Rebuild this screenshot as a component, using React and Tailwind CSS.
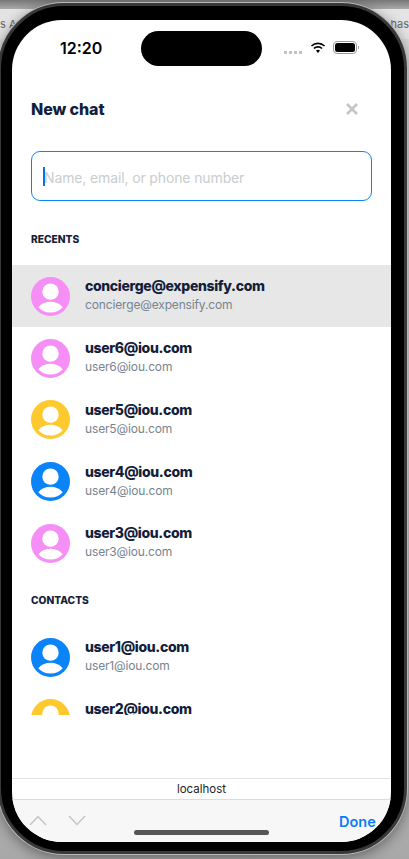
import React from "react";

const PINK = "#f58ff5";
const YELLOW = "#fdc92f";
const BLUE = "#0b84fa";

function Avatar({ color }) {
  return (
    <svg width="39" height="39" viewBox="0 0 40 40" className="shrink-0 mt-[1px]">
      <circle cx="20" cy="20" r="20" fill={color} />
      <circle cx="20" cy="15" r="8.4" fill="#fff" />
      <path d="M7.5 31C10.5 27.5 15 25.5 20 25.5S29.5 27.5 32.5 31C29.5 34.5 25 36.5 20 36.5S10.5 34.5 7.5 31Z" fill="#fff" />
    </svg>
  );
}

function Row({ email, color, active, clipped }) {
  return (
    <div className={`flex items-center gap-[15px] h-[61.75px] px-[19px] shrink-0 ${active ? "bg-[#e7e7e7]" : "bg-white"}`}>
      <Avatar color={color} />
      <div className="flex flex-col pb-[1px]">
        <span className={`text-[14px] font-extrabold tracking-[-0.34px] text-[#122039] ${clipped ? "leading-[11px] mb-[18px]" : "leading-[19px]"}`}>{email}</span>
        {!clipped && <span className="text-[12px] leading-[19px] tracking-[-0.15px] text-[#76848f]">{email}</span>}
      </div>
    </div>
  );
}

export default function App() {
  return (
    <div className="relative w-[409px] h-[859px] overflow-hidden bg-gradient-to-b from-[#dcdcdc] via-[#d6d6d6] to-[#a8a8a8] font-['Inter',sans-serif]">
      {/* browser behind the simulator */}
      <div className="h-[9px] bg-gradient-to-b from-[#777] to-[#aaa]" />
      <div className="flex justify-between h-[30px] bg-[#e4e4e4] text-[11px] leading-[30px] text-[#666]">
        <span>s A</span>
        <span>has</span>
      </div>

      {/* phone */}
      <div className="absolute left-[-2px] top-[3px] w-[409px] h-[851px] rounded-[66px] bg-black border-[3px] border-[#383838] shadow-[0_0_0_1px_#b8b8b8,0_3px_14px_rgba(0,0,0,0.45)]">
        <div className="absolute left-[11px] top-[14px] w-[379px] h-[822px] rounded-[50px] overflow-hidden bg-white flex flex-col">
          {/* status bar */}
          <div className="relative h-[56px] shrink-0">
            <span className="absolute left-[48px] top-[18px] text-[16px] leading-[20px] font-semibold text-black">12:20</span>
            <div className="absolute left-[129px] top-[11px] w-[121px] h-[35px] rounded-full bg-black" />
            <div className="absolute left-[272px] top-[31px] flex gap-[2px] items-center">
              <span className="w-[3px] h-[3px] bg-[#c4c4c4]" />
              <span className="w-[3px] h-[3px] bg-[#c4c4c4]" />
              <span className="w-[3px] h-[3px] bg-[#c4c4c4]" />
              <span className="w-[3px] h-[3px] bg-[#c4c4c4]" />
            </div>
            <svg className="absolute left-[298px] top-[22px]" width="16" height="12" viewBox="0 0 16 12">
              <path d="M8 2.2c2.3 0 4.4.9 6 2.4l1.1-1.2A10.4 10.4 0 0 0 8 .5 10.4 10.4 0 0 0 .9 3.4L2 4.6a8.7 8.7 0 0 1 6-2.4Z" fill="#000" />
              <path d="M8 5.8c1.3 0 2.5.5 3.4 1.3l1.2-1.2A6.8 6.8 0 0 0 8 4.1c-1.8 0-3.4.7-4.6 1.8l1.2 1.2A5 5 0 0 1 8 5.8Z" fill="#000" />
              <path d="M8 7.7c-.8 0-1.5.3-2 .8L8 11l2-2.5a3 3 0 0 0-2-.8Z" fill="#000" />
            </svg>
            <div className="absolute left-[321px] top-[21px] w-[24px] h-[13px] rounded-[4px] border border-[#9a9a9a] p-[1px]">
              <div className="w-full h-full rounded-[2.5px] bg-black" />
            </div>
            <div className="absolute left-[346px] top-[26px] w-[1px] h-[3px] bg-[#aaa]" />
          </div>

          {/* header */}
          <div className="flex items-center justify-between h-[66px] px-[19px] shrink-0">
            <span className="text-[16px] leading-[24px] font-extrabold tracking-[-0.1px] text-[#122039]">New chat</span>
            <svg width="14" height="14" viewBox="0 0 14 14" className="mr-[13px]">
              <path d="M2 2l10 10M12 2L2 12" stroke="#c2c6c6" strokeWidth="2.6" />
            </svg>
          </div>

          {/* search */}
          <div className="px-[19px] shrink-0 mt-[9px]">
            <div className="flex items-center h-[50px] pl-[11px] rounded-[9px] border border-[#0b84fa] bg-white">
              <span className="w-[2px] h-[19px] bg-[#0b6cf0]" />
              <span className="text-[14px] leading-[20px] pt-[3px] -ml-[1px] tracking-[-0.13px] text-[#c9cdcd]">Name, email, or phone number</span>
            </div>
          </div>

          <div className="px-[19px] mt-[31px] h-[14px] text-[10.2px] leading-[14px] font-extrabold text-[#122039] shrink-0">RECENTS</div>

          {/* list, cut off above the accessory bar */}
          <div className="mt-[19px] h-[449.5px] overflow-hidden shrink-0 flex flex-col">
            <Row email="concierge@expensify.com" color={PINK} active />
            <Row email="user6@iou.com" color={PINK} />
            <Row email="user5@iou.com" color={YELLOW} />
            <Row email="user4@iou.com" color={BLUE} />
            <Row email="user3@iou.com" color={PINK} />
            <div className="px-[19px] mt-[19px] h-[14px] text-[10.2px] leading-[14px] font-extrabold text-[#122039] shrink-0">CONTACTS</div>
            <div className="h-[19px] shrink-0" />
            <Row email="user1@iou.com" color={BLUE} />
            <Row email="user2@iou.com" color={YELLOW} clipped />
          </div>

          <div className="flex-1" />

          {/* safari bar */}
          <div className="h-[21px] shrink-0 border-t border-[#e3e3e3] text-center text-[11.5px] leading-[20px] text-[#222]">localhost</div>
          <div className="relative h-[43px] shrink-0 border-t border-[#dcdcdc] bg-[#f7f7f7]">
            <svg className="absolute left-[17px] top-[15px]" width="18" height="11" viewBox="0 0 18 11">
              <path d="M1 10l8-8.5L17 10" fill="none" stroke="#c4c4c4" strokeWidth="1.4" />
            </svg>
            <svg className="absolute left-[56px] top-[15px]" width="18" height="11" viewBox="0 0 18 11">
              <path d="M1 1l8 8.5L17 1" fill="none" stroke="#c4c4c4" strokeWidth="1.4" />
            </svg>
            <span className="absolute left-[327px] top-[12px] text-[14.5px] leading-[20px] font-semibold text-[#0b7bfa]">Done</span>
            <div className="absolute left-[122px] top-[30px] w-[135px] h-[5px] rounded-full bg-[#555]" />
          </div>
        </div>
      </div>
    </div>
  );
}
